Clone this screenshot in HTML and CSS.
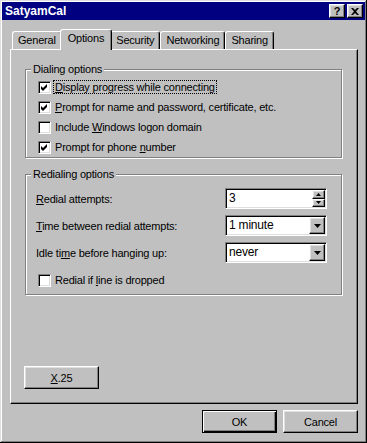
FILE: index.html
```html
<!DOCTYPE html>
<html lang="en">
<head>
    <meta charset="UTF-8">
    <title>SatyamCal</title>
    <link rel="stylesheet" href="styles.css">
</head>
<body>
    <div class="window">
        <div class="titlebar">
            <span class="title">SatyamCal</span>
            <div class="caption-buttons">
                <button class="cap-btn">?</button>
                <button class="cap-btn">
                    <svg width="8" height="7" viewBox="0 0 8 7"><path d="M0 0H2L4 2L6 0H8L5 3.5L8 7H6L4 5L2 7H0L3 3.5Z" fill="#000"/></svg>
                </button>
            </div>
        </div>

        <div class="body">
            <!-- Onglets -->
            <div class="tabs">
                <div class="tab">General</div>
                <div class="tab active">Options</div>
                <div class="tab">Security</div>
                <div class="tab">Networking</div>
                <div class="tab">Sharing</div>
            </div>

            <div class="panel">
                <div class="group">
                    <div class="legend">Dialing options</div>
                    <div class="checks">
                        <div class="check-row">
                            <span class="checkbox"><svg width="7" height="7" viewBox="0 0 7 7"><path d="M0 2L2 4L6 0V3L2 7L0 5Z" fill="#000"/></svg></span>
                            <span class="check-label focus"><u>D</u>isplay progress while connecting</span>
                        </div>
                        <div class="check-row">
                            <span class="checkbox"><svg width="7" height="7" viewBox="0 0 7 7"><path d="M0 2L2 4L6 0V3L2 7L0 5Z" fill="#000"/></svg></span>
                            <span class="check-label"><u>P</u>rompt for name and password, certificate, etc.</span>
                        </div>
                        <div class="check-row">
                            <span class="checkbox"></span>
                            <span class="check-label">Include <u>W</u>indows logon domain</span>
                        </div>
                        <div class="check-row">
                            <span class="checkbox"><svg width="7" height="7" viewBox="0 0 7 7"><path d="M0 2L2 4L6 0V3L2 7L0 5Z" fill="#000"/></svg></span>
                            <span class="check-label">Prompt for phone <u>n</u>umber</span>
                        </div>
                    </div>
                </div>

                <div class="group group-redial">
                    <div class="legend">Redialing options</div>
                    <div class="field-row">
                        <span><u>R</u>edial attempts:</span>
                        <div class="field">
                            <span class="value">3</span>
                            <div class="spin-btns">
                                <span class="spin-btn"><svg width="5" height="3" viewBox="0 0 5 3"><path d="M2.5 0L5 3H0Z" fill="#000"/></svg></span>
                                <span class="spin-btn"><svg width="5" height="3" viewBox="0 0 5 3"><path d="M0 0H5L2.5 3Z" fill="#000"/></svg></span>
                            </div>
                        </div>
                    </div>
                    <div class="field-row">
                        <span><u>T</u>ime between redial attempts:</span>
                        <div class="field">
                            <span class="value">1 minute</span>
                            <span class="drop-btn"><svg width="7" height="4" viewBox="0 0 7 4"><path d="M0 0H7L3.5 4Z" fill="#000"/></svg></span>
                        </div>
                    </div>
                    <div class="field-row">
                        <span>Idle ti<u>m</u>e before hanging up:</span>
                        <div class="field">
                            <span class="value">never</span>
                            <span class="drop-btn"><svg width="7" height="4" viewBox="0 0 7 4"><path d="M0 0H7L3.5 4Z" fill="#000"/></svg></span>
                        </div>
                    </div>
                    <div class="check-row redial-check">
                        <span class="checkbox"></span>
                        <span class="check-label">Redial if <u>l</u>ine is dropped</span>
                    </div>
                </div>

                <button class="btn x25"><u>X</u>.25</button>
            </div>

            <div class="footer">
                <button class="btn default">OK</button>
                <button class="btn">Cancel</button>
            </div>
        </div>
    </div>
</body>
</html>
```

FILE: styles.css
```css
body {
    margin: 0;
    background: #c0c0c0;
    font-family: "Liberation Sans", Arial, sans-serif;
    font-size: 11px;
    letter-spacing: -0.2px;
    color: #000;
}
.window {
    width: 367px;
    height: 443px;
    box-sizing: border-box;
    padding: 2px;
    background: #c0c0c0;
    box-shadow: inset -1px -1px #000, inset 1px 1px #dfdfdf, inset -2px -2px #808080, inset 2px 2px #fff;
}
.titlebar {
    height: 18px;
    background: #000080;
    display: flex;
    align-items: center;
    justify-content: space-between;
    padding: 0 2px 0 3px;
}
.title {
    color: #fff;
    font-weight: bold;
    font-size: 12px;
    letter-spacing: 0;
}
.caption-buttons {
    display: flex;
    gap: 2px;
}
.cap-btn, .btn, .drop-btn, .spin-btn {
    background: #c0c0c0;
    border: 1px solid;
    border-color: #fff #000 #000 #fff;
    box-shadow: inset -1px -1px #808080, inset 1px 1px #dfdfdf;
    box-sizing: border-box;
}
.cap-btn {
    width: 16px;
    height: 14px;
    padding: 0;
    display: flex;
    align-items: center;
    justify-content: center;
    font-family: inherit;
    font-size: 11px;
    font-weight: bold;
    line-height: 1;
}
.body {
    padding: 9px 7px 0 8px;
}
.tabs {
    display: flex;
    align-items: flex-end;
    height: 20px;
    padding-left: 2px;
}
.tab {
    height: 18px;
    box-sizing: border-box;
    padding: 0 5px;
    border-top: 1px solid #fff;
    border-left: 1px solid #fff;
    border-right: 1px solid #000;
    border-radius: 3px 3px 0 0;
    box-shadow: inset -1px 0 #808080;
    background: #c0c0c0;
    line-height: 16px;
    white-space: nowrap;
}
.tab.active {
    position: relative;
    z-index: 1;
    height: 21px;
    margin: 0 -2px -1px;
    padding: 0 7px 2px;
    line-height: 17px;
}
.panel {
    height: 355px;
    box-sizing: border-box;
    border: 1px solid;
    border-color: #fff #000 #000 #fff;
    box-shadow: inset -1px -1px #808080;
    padding: 19px 15px 14px 14px;
    display: flex;
    flex-direction: column;
}
.group {
    border: 1px solid #808080;
    box-shadow: inset 1px 1px #fff, 1px 1px #fff;
}
.legend {
    width: fit-content;
    margin: -7px 0 0 5px;
    padding: 0 2px;
    line-height: 13px;
    background: #c0c0c0;
}
.checks {
    margin-top: 1px;
}
.check-row {
    display: flex;
    align-items: center;
    height: 20px;
    padding-left: 12px;
}
.checkbox {
    flex: none;
    width: 13px;
    height: 13px;
    box-sizing: border-box;
    background: #fff;
    border: 1px solid;
    border-color: #808080 #fff #fff #808080;
    box-shadow: inset 1px 1px #000, inset -1px -1px #dfdfdf;
    display: flex;
    align-items: center;
    justify-content: center;
}
.check-label {
    margin-left: 2px;
    padding: 0 1px;
    border: 1px dotted transparent;
    line-height: 12px;
    white-space: nowrap;
}
.check-label.focus {
    border-color: #000;
}
.group-redial {
    margin-top: 16px;
    padding-bottom: 4px;
}
.field-row {
    display: flex;
    align-items: center;
    justify-content: space-between;
    height: 21px;
    padding: 0 14px 0 10px;
    margin-top: 6px;
}
.legend + .field-row {
    margin-top: 7px;
}
.redial-check {
    margin-top: 7px;
}
.field {
    width: 102px;
    height: 21px;
    box-sizing: border-box;
    padding: 1px;
    background: #fff;
    border: 1px solid;
    border-color: #808080 #fff #fff #808080;
    box-shadow: inset 1px 1px #000, inset -1px -1px #dfdfdf;
    display: flex;
}
.value {
    flex: 1;
    padding-left: 2px;
    line-height: 17px;
    font-size: 12px;
}
.drop-btn {
    width: 16px;
    height: 17px;
    display: flex;
    align-items: center;
    justify-content: center;
}
.spin-btns {
    width: 13px;
    display: flex;
    flex-direction: column;
}
.spin-btn {
    flex: 1;
    display: flex;
    align-items: center;
    justify-content: center;
}
.btn {
    width: 75px;
    height: 23px;
    padding: 0;
    font-family: inherit;
    font-size: 11px;
    letter-spacing: inherit;
    color: #000;
}
.btn.default {
    border-color: #000;
    box-shadow: inset 1px 1px #fff, inset -1px -1px #000, inset -2px -2px #808080;
}
.x25 {
    margin-top: auto;
    margin-left: -1px;
}
.footer {
    display: flex;
    justify-content: flex-end;
    gap: 6px;
    padding-top: 6px;
}
```
